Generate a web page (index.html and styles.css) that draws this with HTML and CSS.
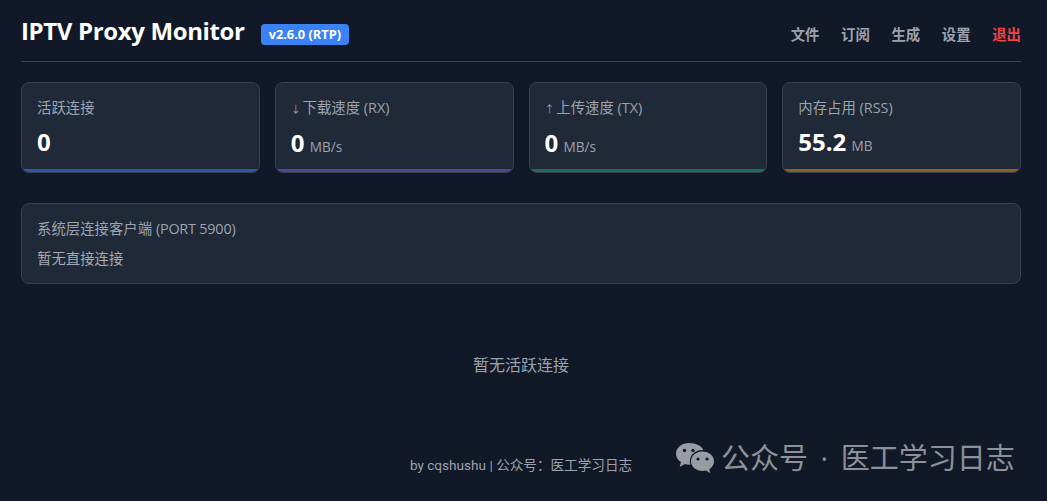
FILE: index.html
```html
<!DOCTYPE html>
<html>
<head>
    <title>IPTV Proxy Monitor</title>
    <link rel="stylesheet" href="styles.css">
</head>
<body>
    <div class="header">
        <div class="brand">
            <h1>IPTV Proxy Monitor</h1>
            <span class="version">v2.6.0 (RTP)</span>
        </div>
        <div class="nav">
            <a href="#">文件</a>
            <a href="#">订阅</a>
            <a href="#">生成</a>
            <a href="#">设置</a>
            <a href="#" class="logout">退出</a>
        </div>
    </div>

    <div class="stats">
        <div class="card card-blue">
            <div class="card-label">活跃连接</div>
            <div class="card-value">0</div>
        </div>
        <div class="card card-purple">
            <div class="card-label"><span class="arrow">↓</span> 下载速度 (RX)</div>
            <div class="card-value">0 <span class="unit">MB/s</span></div>
        </div>
        <div class="card card-green">
            <div class="card-label"><span class="arrow">↑</span> 上传速度 (TX)</div>
            <div class="card-value">0 <span class="unit">MB/s</span></div>
        </div>
        <div class="card card-orange">
            <div class="card-label">内存占用 (RSS)</div>
            <div class="card-value">55.2 <span class="unit">MB</span></div>
        </div>
    </div>

    <div class="panel">
        <div class="panel-title">系统层连接客户端 <span class="port">(PORT 5900)</span></div>
        <div class="panel-text">暂无直接连接</div>
    </div>

    <div class="empty">暂无活跃连接</div>
    <div class="footer">by cqshushu | 公众号：医工学习日志</div>

    <!-- watermark sits on top of the page -->
    <div class="watermark">
        <svg class="wechat" width="40" height="32" viewBox="0 0 40 32">
            <path fill="#9a9ca3" d="M14 1C6.8 1 1 5.8 1 11.700c0 3.400 1.900 6.400 4.900 8.400L4.700 25l5.300-2.900c1.300.4 2.700.6 4 .6.500 0 1 0 1.500-.1-.4-1.100-.6-2.200-.6-3.400 0-6.200 5.600-11.100 12.800-11.100h.6C26.800 3.900 21 1 14 1z"/>
            <path fill="#9a9ca3" d="M39 19.300c0-5.400-5.100-9.700-11.500-9.700S16 13.900 16 19.300 21.100 29 27.500 29c1.200 0 2.400-.2 3.500-.5l4.300 2.800-1-3.900c2.800-1.900 4.700-4.800 4.700-8.100z"/>
            <circle cx="9.500" cy="8.500" r="1.700" fill="#111827"/>
            <circle cx="18" cy="8.500" r="1.700" fill="#111827"/>
            <circle cx="23" cy="17" r="1.600" fill="#111827"/>
            <circle cx="32" cy="17" r="1.600" fill="#111827"/>
        </svg>
        <span>公众号 · 医工学习日志</span>
    </div>
</body>
</html>
```

FILE: styles.css
```css
* {
    box-sizing: border-box;
}
body {
    margin: 0;
    padding: 0 26px 0 21px;
    min-height: 501px;
    overflow: hidden;
    position: relative;
    background-color: #111827;
    color: #9ca3af;
    font-family: "Open Sans", "Noto Sans CJK SC", sans-serif;
}
.header {
    display: flex;
    justify-content: space-between;
    align-items: center;
    height: 62px;
    padding-bottom: 1px;
    border-bottom: 1px solid #374151;
}
.brand {
    display: flex;
    align-items: center;
    gap: 16px;
}
h1 {
    margin: 0;
    font-size: 24px;
    font-weight: 700;
    letter-spacing: -0.36px;
    color: #fff;
}
.version {
    margin-top: 8px;
    padding: 2px 8px;
    border-radius: 4px;
    background-color: #3b82f6;
    color: #fff;
    font-size: 12.8px;
    line-height: 17px;
    font-weight: 700;
}
.nav {
    display: flex;
    gap: 21.6px;
    padding-top: 6px;
}
.nav a {
    color: #9ca3af;
    font-size: 14.4px;
    font-weight: 700;
    text-decoration: none;
}
.nav a.logout {
    color: #ef4444;
}
.stats {
    display: grid;
    grid-template-columns: repeat(4, 1fr);
    gap: 15px;
    margin-top: 20px;
}
.card {
    height: 91px;
    padding: 16px 15px;
    border: 1px solid #374151;
    border-radius: 8px;
    background: #1f2937 no-repeat bottom / 100% 3px;
}
.card-blue {
    background-image: linear-gradient(#2c5a9e, #2c5a9e);
}
.card-purple {
    background-image: linear-gradient(#5a4296, #5a4296);
}
.card-green {
    background-image: linear-gradient(#1c6f5f, #1c6f5f);
}
.card-orange {
    background-image: linear-gradient(#8a6220, #8a6220);
}
.card-label {
    font-size: 14.4px;
    line-height: 18px;
}
.arrow {
    margin-right: -2px;
    font-size: 10px;
}
.card-value {
    margin-top: 8px;
    color: #fff;
    font-size: 24px;
    line-height: 33px;
    font-weight: 700;
}
.unit {
    margin-left: -1px;
    color: #9ca3af;
    font-size: 13.6px;
    font-weight: 400;
}
.panel {
    height: 81px;
    margin-top: 30px;
    padding: 16px 15px;
    border: 1px solid #374151;
    border-radius: 8px;
    background-color: #1f2937;
}
.panel-title {
    font-size: 14.4px;
    line-height: 18px;
}
.port {
    letter-spacing: -0.2px;
}
.panel-text {
    margin-top: 12px;
    font-size: 14.4px;
    line-height: 18px;
    color: #a3a9b3;
}
.empty {
    margin-top: 70px;
    text-align: center;
    font-size: 16px;
    line-height: 22px;
}
.footer {
    margin-top: 80px;
    text-align: center;
    font-family: Roboto, "Noto Sans CJK SC", sans-serif;
    font-size: 13.6px;
    line-height: 18px;
}
.watermark {
    position: absolute;
    left: 675px;
    top: 441px;
    display: flex;
    align-items: center;
    gap: 6px;
    color: #8d9098;
    font-size: 29px;
    line-height: 34px;
    word-spacing: 5px;
    white-space: nowrap;
}
```
